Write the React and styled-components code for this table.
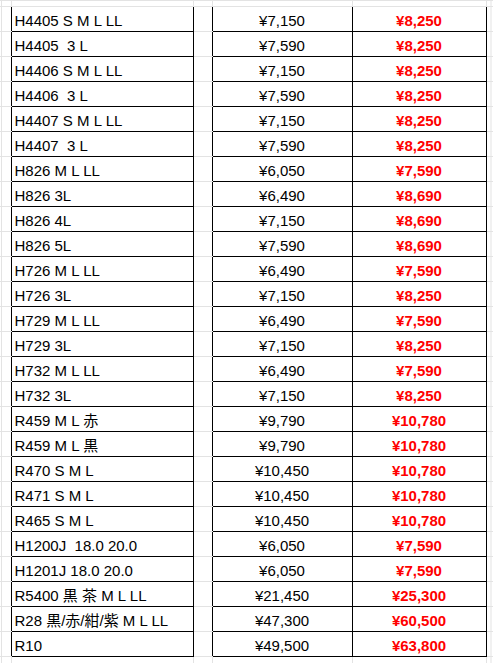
import React from "react";
import styled, { createGlobalStyle } from "styled-components";

const GlobalStyle = createGlobalStyle`
  html, body {
    margin: 0;
    padding: 0;
    background: #ffffff;
  }
  body {
    font-family: "Liberation Sans", "Noto Sans CJK JP", sans-serif;
    color: #000;
  }
`;

const GRID = "#e3e3e3";

const Sheet = styled.table`
  border-collapse: collapse;
  table-layout: fixed;
  width: 493px;
  font-size: 15px;
`;

const Row = styled.tr`
  height: ${(p) => p.$h}px;
`;

// cellule bordée noire (tableau des produits / prix)
const Cell = styled.td`
  border: 1px solid #000;
  padding: 0 3px;
  white-space: pre;
  overflow: hidden;
  line-height: 1;
  padding-top: 2px;
  text-align: ${(p) => p.$align || "left"};
  color: ${(p) => (p.$sale ? "#ff0000" : "#000")};
  font-weight: ${(p) => (p.$sale ? 700 : 400)};
`;

// lignes de grille grises d'Excel, hors tableau
const Blank = styled.td`
  padding: 0;
  border-top: 1px solid ${GRID};
  border-bottom: 1px solid ${GRID};
`;

const Edge = styled(Blank)`
  background: linear-gradient(
    to right,
    transparent 1px,
    ${GRID} 1px,
    ${GRID} 2px,
    transparent 2px
  );
`;

const EdgeRight = styled(Blank)`
  background: linear-gradient(
    to right,
    transparent 4px,
    ${GRID} 4px,
    ${GRID} 5px,
    transparent 5px
  );
`;

const Open = styled(Blank)`
  border-left: 1px solid ${GRID};
  border-right: 1px solid ${GRID};
`;

const items = [
  ["H4405 S M L LL", "¥7,150", "¥8,250"],
  ["H4405  3 L", "¥7,590", "¥8,250"],
  ["H4406 S M L LL", "¥7,150", "¥8,250"],
  ["H4406  3 L", "¥7,590", "¥8,250"],
  ["H4407 S M L LL", "¥7,150", "¥8,250"],
  ["H4407  3 L", "¥7,590", "¥8,250"],
  ["H826 M L LL", "¥6,050", "¥7,590"],
  ["H826 3L", "¥6,490", "¥8,690"],
  ["H826 4L", "¥7,150", "¥8,690"],
  ["H826 5L", "¥7,590", "¥8,690"],
  ["H726 M L LL", "¥6,490", "¥7,590"],
  ["H726 3L", "¥7,150", "¥8,250"],
  ["H729 M L LL", "¥6,490", "¥7,590"],
  ["H729 3L", "¥7,150", "¥8,250"],
  ["H732 M L LL", "¥6,490", "¥7,590"],
  ["H732 3L", "¥7,150", "¥8,250"],
  ["R459 M L 赤", "¥9,790", "¥10,780"],
  ["R459 M L 黒", "¥9,790", "¥10,780"],
  ["R470 S M L", "¥10,450", "¥10,780"],
  ["R471 S M L", "¥10,450", "¥10,780"],
  ["R465 S M L", "¥10,450", "¥10,780"],
  ["H1200J  18.0 20.0", "¥6,050", "¥7,590"],
  ["H1201J 18.0 20.0", "¥6,050", "¥7,590"],
  ["R5400 黒 茶 M L LL", "¥21,450", "¥25,300"],
  ["R28 黒/赤/紺/紫 M L LL", "¥47,300", "¥60,500"],
  ["R10", "¥49,500", "¥63,800"],
];

const cols = [11, 182, 19, 140, 134, 7];

const GridRow = ({ h }) => (
  <Row $h={h}>
    <Edge />
    <Open />
    <Open />
    <Open />
    <Open />
    <EdgeRight />
  </Row>
);

const App = () => (
  <>
    <GlobalStyle />
    <Sheet>
      <colgroup>
        {cols.map((w, i) => (
          <col key={i} style={{ width: w }} />
        ))}
      </colgroup>
      <tbody>
        <GridRow h={6} />
        {items.map(([name, price, sale]) => (
          <Row key={name} $h={25}>
            <Edge />
            <Cell>{name}</Cell>
            <Blank />
            <Cell $align="center">{price}</Cell>
            <Cell $align="center" $sale>
              {sale}
            </Cell>
            <EdgeRight />
          </Row>
        ))}
        <GridRow h={10} />
      </tbody>
    </Sheet>
  </>
);

export default App;
